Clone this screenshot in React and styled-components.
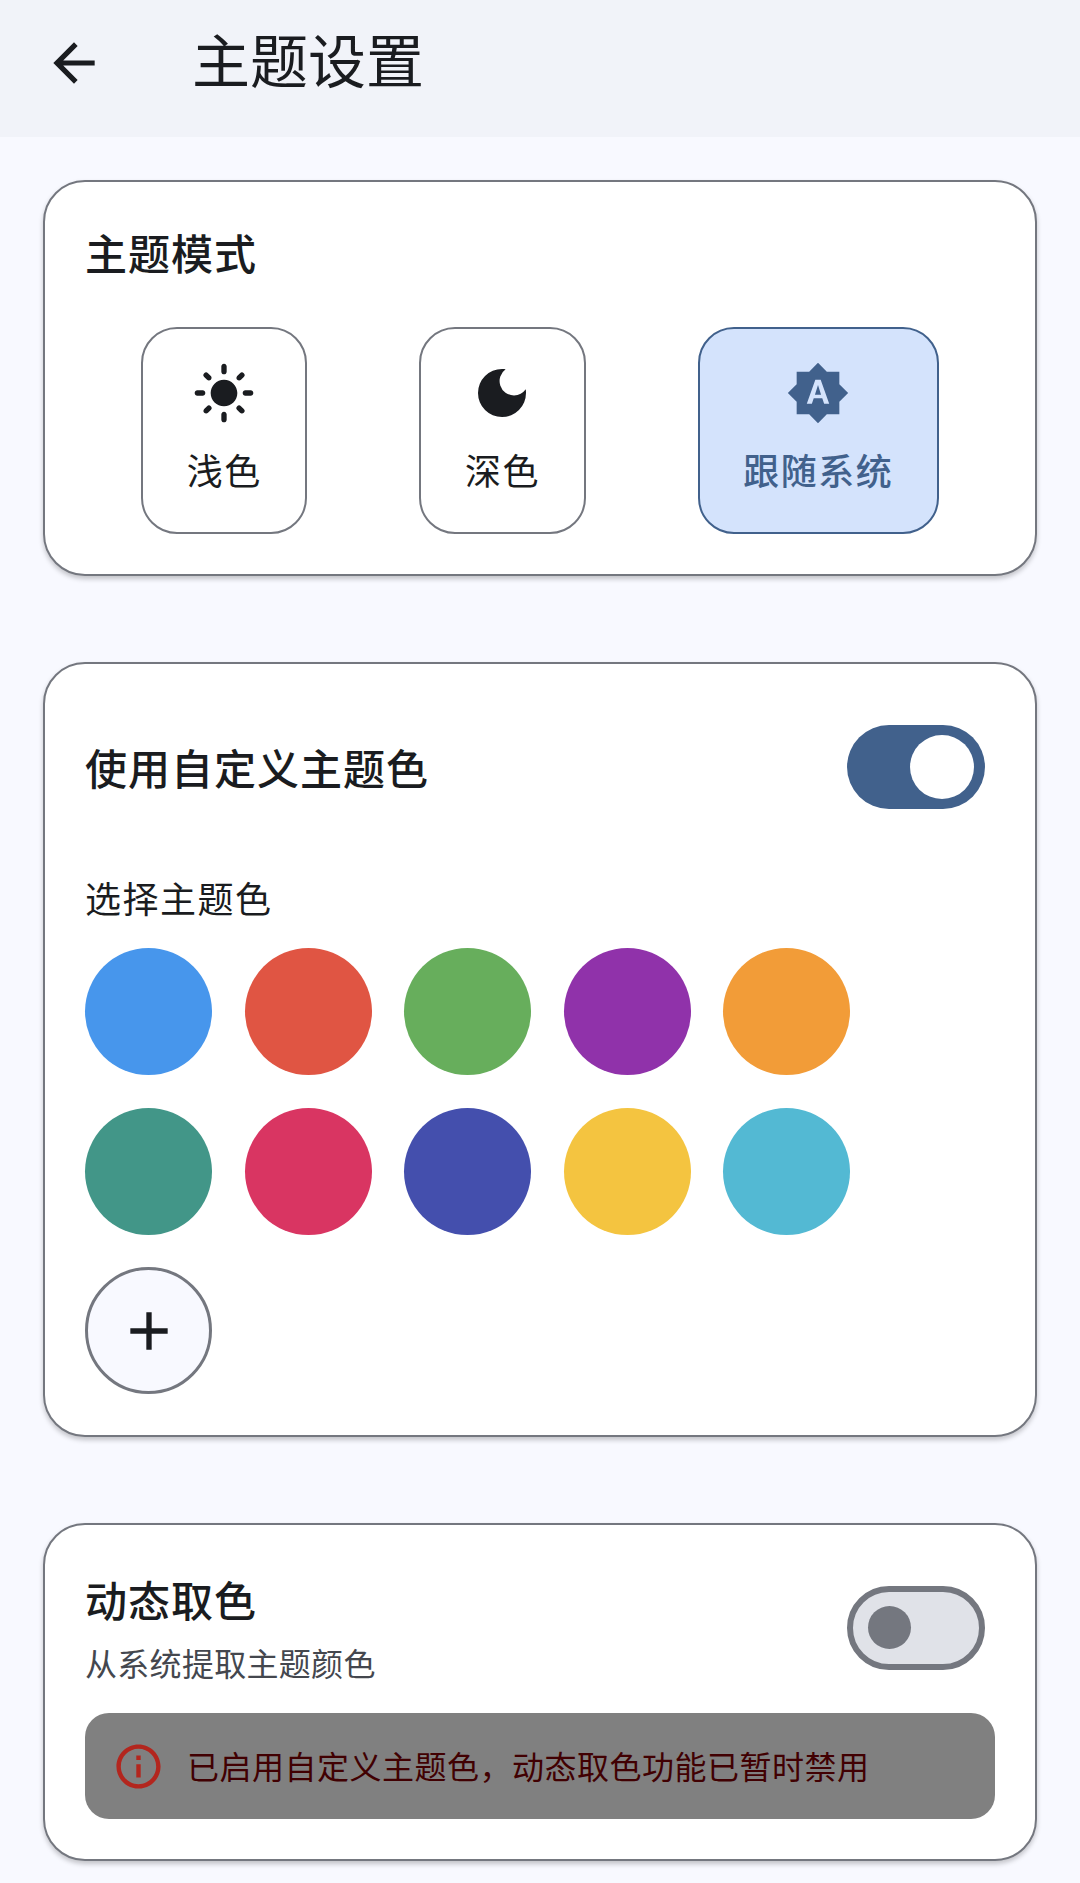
import React from 'react';
import styled, { createGlobalStyle } from 'styled-components';
import { MdArrowBack, MdLightMode, MdDarkMode, MdBrightnessAuto, MdAdd, MdInfoOutline } from 'react-icons/md';

const GlobalStyle = createGlobalStyle`
  html, body { margin: 0; padding: 0; background: #f8f9ff; }
  body { font-family: "Noto Sans CJK SC", "Noto Sans", sans-serif; color: #1a1c20; }
  * { box-sizing: border-box; }
`;

const Page = styled.div`
  width: 1080px; height: 1883px; overflow: hidden;
  background: #f8f9ff;
  display: flex; flex-direction: column;
`;
const Header = styled.header`
  height: 137px; background: #f1f3f9;
  display: flex; align-items: center;
  padding: 0 0 12px 43px;
`;
const BackIcon = styled(MdArrowBack)`
  width: 62px; height: 62px; color: #1a1c20; flex: none;
`;
const HeaderTitle = styled.h1`
  margin: 0 0 10px 87px;
  font-size: 58px; font-weight: 400; line-height: 76px;
`;
const Content = styled.main`
  padding: 43px 43px 0;
  display: flex; flex-direction: column; gap: 86px;
`;
const Card = styled.section`
  background: #ffffff;
  border: 2.5px solid #74777f; border-radius: 42px;
  box-shadow: 0 3px 5px rgba(0, 0, 0, 0.22);
  padding: 40px 40px;
`;
const CardTitle = styled.h2`
  margin: 0;
  font-size: 42px; font-weight: 500; line-height: 56px; letter-spacing: 1px;
`;
const ModeTitle = styled(CardTitle)`
  margin-top: 2px;
`;
const ModeRow = styled.div`
  display: flex; justify-content: space-around;
  margin-top: 47px;
`;
const ModeButton = styled.div`
  height: 207px; padding: 32px 43.5px 0;
  border: 2.5px solid ${props => (props.$active ? '#41618c' : '#74777f')};
  border-radius: 36px;
  background: ${props => (props.$active ? '#d4e3fc' : '#ffffff')};
  color: ${props => (props.$active ? '#41618c' : '#1a1c20')};
  display: flex; flex-direction: column; align-items: center;
  svg { width: 64px; height: 64px; flex: none; }
`;
const ModeLabel = styled.span`
  margin-top: 19px;
  font-size: 36px; line-height: 50px; letter-spacing: 1.5px; white-space: nowrap;
  font-weight: ${props => (props.$active ? 500 : 400)};
`;
const SwitchRow = styled.div`
  display: flex; justify-content: space-between; align-items: center;
  padding: 21px 10px 20px 0;
`;
const Toggle = styled.div`
  width: 138px; height: 84px; border-radius: 42px; flex: none;
  display: flex; align-items: center;
  background: ${props => (props.$on ? '#41618c' : '#e0e2e8')};
  border: ${props => (props.$on ? 'none' : '6px solid #74777f')};
  justify-content: ${props => (props.$on ? 'flex-end' : 'flex-start')};
  padding: ${props => (props.$on ? '0 11px' : '0 15px')};
`;
const Thumb = styled.span`
  display: block; border-radius: 50%;
  width: ${props => (props.$on ? 64 : 43)}px;
  height: ${props => (props.$on ? 64 : 43)}px;
  background: ${props => (props.$on ? '#ffffff' : '#74777f')};
`;
const SectionLabel = styled.div`
  margin-top: 43px;
  font-size: 36px; line-height: 50px; letter-spacing: 1.5px;
`;
const Swatches = styled.div`
  margin: 26px 0 1px;
  display: grid; grid-template-columns: repeat(5, 127px);
  column-gap: 32.5px; row-gap: 32.5px;
`;
const Swatch = styled.div`
  width: 127px; height: 127px; border-radius: 50%;
  background: ${props => props.$color};
`;
const AddSwatch = styled.div`
  width: 127px; height: 127px; border-radius: 50%;
  background: #f8f9ff; border: 3px solid #74777f;
  display: flex; align-items: center; justify-content: center;
  svg { width: 64px; height: 64px; color: #1a1c20; }
`;
const DynamicRow = styled.div`
  display: flex; justify-content: space-between; align-items: center;
  padding: 6px 10px 6px 0;
`;
const DynamicText = styled.div`
  display: flex; flex-direction: column; gap: 13px;
`;
const Subtitle = styled.div`
  font-size: 32px; line-height: 44px; color: #44474e; letter-spacing: 0.3px;
`;
const Notice = styled.div`
  margin: 23px 0 0; height: 106px;
  border-radius: 24px; background: #808080;
  display: flex; align-items: center; gap: 22px;
  padding-left: 27px;
`;
const NoticeIcon = styled(MdInfoOutline)`
  width: 53px; height: 53px; color: #b3261e; flex: none;
`;
const NoticeText = styled.span`
  margin-bottom: 3px;
  font-size: 32px; line-height: 44px; color: #410002; letter-spacing: 0.5px; white-space: nowrap;
`;

const modes = [
  { label: '浅色', Icon: MdLightMode },
  { label: '深色', Icon: MdDarkMode },
  { label: '跟随系统', Icon: MdBrightnessAuto, active: true },
];
const colors = [
  '#4796ec', '#e05543', '#67ae5c', '#9032aa', '#f29c38',
  '#429688', '#d93562', '#444fad', '#f4c440', '#53b9d3',
];

export default function App() {
  return (
    <Page>
      <GlobalStyle />
      <Header>
        <BackIcon />
        <HeaderTitle>主题设置</HeaderTitle>
      </Header>
      <Content>
        <Card>
          <ModeTitle>主题模式</ModeTitle>
          <ModeRow>
            {modes.map(({ label, Icon, active }) => (
              <ModeButton key={label} $active={active}>
                <Icon />
                <ModeLabel $active={active}>{label}</ModeLabel>
              </ModeButton>
            ))}
          </ModeRow>
        </Card>
        <Card>
          <SwitchRow>
            <CardTitle>使用自定义主题色</CardTitle>
            <Toggle $on><Thumb $on /></Toggle>
          </SwitchRow>
          <SectionLabel>选择主题色</SectionLabel>
          <Swatches>
            {colors.map(c => <Swatch key={c} $color={c} />)}
            <AddSwatch><MdAdd /></AddSwatch>
          </Swatches>
        </Card>
        <Card>
          <DynamicRow>
            <DynamicText>
              <CardTitle>动态取色</CardTitle>
              <Subtitle>从系统提取主题颜色</Subtitle>
            </DynamicText>
            <Toggle><Thumb /></Toggle>
          </DynamicRow>
          <Notice>
            <NoticeIcon />
            <NoticeText>已启用自定义主题色，动态取色功能已暂时禁用</NoticeText>
          </Notice>
        </Card>
      </Content>
    </Page>
  );
}
